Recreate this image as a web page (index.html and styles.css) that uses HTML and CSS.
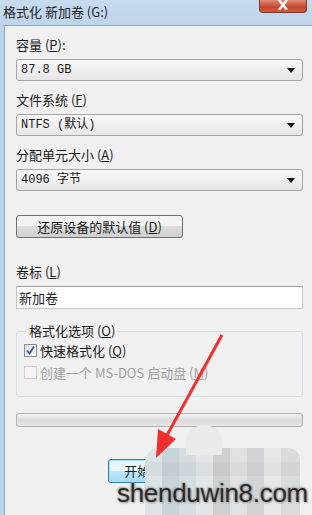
FILE: index.html
```html
<!DOCTYPE html>
<html lang="zh-CN">
<head>
    <meta charset="UTF-8">
    <meta name="viewport" content="width=device-width, initial-scale=1.0">
    <title>格式化 新加卷 (G:)</title>
    <link rel="stylesheet" href="styles.css">
</head>
<body>
    <div class="janela">
        <div class="titulo">
            <span class="titulo_texto">格式化 新加卷 (G:)</span>
            <div class="fechar">
                <svg width="14" height="10" viewBox="0 0 14 10"><path d="M3 0 L11 10 M11 0 L3 10" stroke="#fff" stroke-width="2.4"/></svg>
            </div>
        </div>
        <div class="painel">
            <div class="rotulo">容量 (<u>P</u>):</div>
            <div class="caixa mono">87.8 GB<span class="seta"></span></div>

            <div class="rotulo">文件系统 (<u>F</u>)</div>
            <div class="caixa mono">NTFS (默认)<span class="seta"></span></div>

            <div class="rotulo">分配单元大小 (<u>A</u>)</div>
            <div class="caixa mono">4096 字节<span class="seta"></span></div>

            <div class="botao botao_padrao">还原设备的默认值 (<u>D</u>)</div>

            <div class="rotulo rotulo_volume">卷标 (<u>L</u>)</div>
            <div class="campo">新加卷</div>

            <fieldset class="grupo">
                <legend>格式化选项 (<u>O</u>)</legend>
                <div class="opcao">
                    <span class="marca marca_ativa">
                        <svg width="11" height="11" viewBox="0 0 11 11"><path d="M2 5.5 L4.5 8.5 L9 1.5" stroke="#3a5a9c" stroke-width="1.8" fill="none"/></svg>
                    </span>
                    <span>快速格式化 (<u>Q</u>)</span>
                </div>
                <div class="opcao opcao_off">
                    <span class="marca"></span>
                    <span>创建一个 MS-DOS 启动盘 (<u>M</u>)</span>
                </div>
            </fieldset>

            <div class="progresso"></div>

            <div class="acoes">
                <div class="botao botao_foco">开始(<u>S</u>)</div>
                <div class="botao">关闭(<u>C</u>)</div>
            </div>
        </div>

        <!-- borrão por cima do botão fechar -->
        <div class="mosaico"></div>
        <div class="mosaico_topo"></div>
        <svg class="flecha" width="80" height="130" viewBox="0 0 80 130">
            <path d="M72 2 L16 104" stroke="#f03030" stroke-width="3"/>
            <path d="M6 125 L8 96 L26 106 Z" fill="#f03030"/>
        </svg>
        <div class="marca_dagua">shenduwin8.com</div>
    </div>
</body>
</html>
```

FILE: styles.css
```css
*{border: 0;margin: 0;padding: 0;box-sizing: border-box;}
body{
    width: 312px;
    height: 515px;
    overflow: hidden;
    font-family: "Noto Sans CJK SC", "Noto Sans", sans-serif;
    font-size: 13px;
    color: #1a1a1a;
    background: #b9d1ea;
}
u{text-decoration: underline;}
.mono{font-family: "Liberation Mono", "Noto Sans CJK SC", monospace; font-size: 12px;}
.janela{
    position: relative;
    height: 515px;
    background: linear-gradient(#c6dbf0, #bcd3ea 30px);
}
.titulo{
    height: 25px;
    display: flex;
    justify-content: space-between;
    padding-left: 3px;
}
.titulo_texto{
    font-size: 13px;
    line-height: 23px;
    color: #222;
}
.fechar{
    width: 48px;
    height: 13px;
    margin-right: 5px;
    border: 1px solid #7a3a2c;
    border-top: 0;
    border-radius: 0 0 4px 4px;
    background: linear-gradient(#e08a74, #c8452c 60%, #d65a3a);
    display: flex;
    justify-content: center;
    align-items: flex-start;
}
.painel{
    margin-left: 4px;
    height: 490px;
    background: #f0f0f0;
    border-top: 1px solid #8fa6bf;
    border-left: 1px solid #8fa6bf;
    padding: 10px 9px 0 11px;
}
.rotulo{
    line-height: 18px;
    margin-bottom: 5px;
}
.caixa{
    position: relative;
    height: 22px;
    border: 1px solid #a5a5a5;
    border-radius: 3px;
    background: linear-gradient(#f8f8f8, #e6e6e6);
    padding-left: 4px;
    line-height: 20px;
    margin-bottom: 10px;
}
.seta{
    position: absolute;
    right: 7px;
    top: 8px;
    border-left: 4px solid transparent;
    border-right: 4px solid transparent;
    border-top: 5px solid #111;
}
.botao{
    height: 23px;
    border: 1px solid #707070;
    border-radius: 3px;
    background: linear-gradient(#f2f2f2 50%, #dddddd 50%, #cfcfcf);
    text-align: center;
    line-height: 21px;
}
.botao_padrao{
    width: 167px;
    margin-top: 24px;
}
.rotulo_volume{margin-top: 25px;}
.campo{
    height: 23px;
    background: #fff;
    border: 1px solid #c5c5c5;
    border-top-color: #a0a0a0;
    padding-left: 2px;
    line-height: 21px;
}
.grupo{
    margin-top: 14px;
    height: 74px;
    border: 1px solid #d5dfe5;
    border-radius: 3px;
    padding: 0 0 0 7px;
}
.grupo legend{
    margin-left: 2px;
    padding: 0 3px;
    line-height: 16px;
}
.opcao{
    display: flex;
    align-items: center;
    gap: 3px;
    height: 22px;
}
.opcao_off{color: #a0a0a0;}
.marca{
    width: 13px;
    height: 13px;
    border: 1px solid #8e8f8f;
    background: linear-gradient(135deg, #dcdcdc, #ffffff);
    display: flex;
    align-items: center;
    justify-content: center;
}
.opcao_off .marca{border-color: #cfcfcf; background: #f4f4f4;}
.progresso{
    margin-top: 16px;
    height: 14px;
    border: 1px solid #b2b2b2;
    border-radius: 3px;
    background: linear-gradient(#f3f3f3, #dadada 50%, #e6e6e6);
}
.acoes{
    margin-top: 32px;
    display: flex;
    gap: 22px;
    padding-left: 92px;
}
.acoes .botao{width: 75px; height: 24px;}
.botao_foco{
    border-color: #3c7fb1;
    box-shadow: inset 0 0 0 1px #a6e0f8;
    background: linear-gradient(#eaf6fd 50%, #bee6fd 50%, #a7d9f5);
}
.mosaico{
    position: absolute;
    left: 145px;
    top: 448px;
    width: 155px;
    height: 67px;
    border-radius: 14px 12px 0 0;
    background:
        linear-gradient(#ffffff00 0 14px, #00000008 14px 28px, #ffffff00 28px),
        linear-gradient(90deg, #dbe3e7 0 17px, #c9d4d9 17px 34px, #d5dde0 34px 51px, #e3e6e8 51px 68px, #cdd1d3 68px 85px, #dfe1e2 85px 102px, #d2d4d5 102px 119px, #e6e7e7 119px 136px, #dadbdc 136px);
}
.mosaico_topo{
    position: absolute;
    left: 186px;
    top: 425px;
    width: 36px;
    height: 30px;
    border-radius: 50% 50% 0 0;
    background: #e9eaea;
}
.flecha{
    position: absolute;
    left: 150px;
    top: 333px;
}
.marca_dagua{
    position: absolute;
    left: 117px;
    top: 478px;
    font-family: "Liberation Sans", Arial, sans-serif;
    font-size: 26px;
    letter-spacing: -0.3px;
    color: #2a2a2a;
    text-shadow: 0 0 2px #aaa, 1px 1px 2px #999, -1px -1px 2px #aaa;
}
```
